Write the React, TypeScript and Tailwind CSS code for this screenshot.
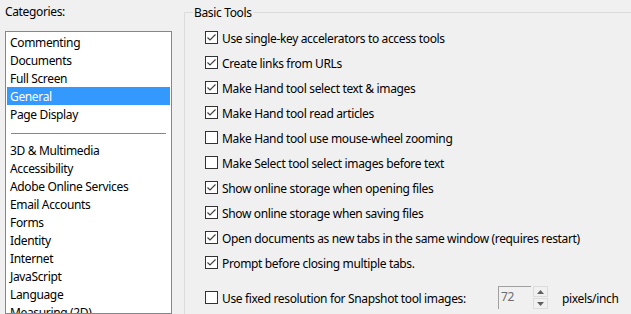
import React from "react";

const categoriesTop = ["Commenting", "Documents", "Full Screen", "General", "Page Display"];
const categoriesBottom = [
  "3D & Multimedia",
  "Accessibility",
  "Adobe Online Services",
  "Email Accounts",
  "Forms",
  "Identity",
  "Internet",
  "JavaScript",
  "Language",
  "Measuring (2D)",
  "Measuring (3D)",
];

const options: [string, boolean][] = [
  ["Use single-key accelerators to access tools", true],
  ["Create links from URLs", true],
  ["Make Hand tool select text & images", true],
  ["Make Hand tool read articles", true],
  ["Make Hand tool use mouse-wheel zooming", false],
  ["Make Select tool select images before text", false],
  ["Show online storage when opening files", true],
  ["Show online storage when saving files", true],
  ["Open documents as new tabs in the same window (requires restart)", true],
  ["Prompt before closing multiple tabs.", true],
];

function Check({ checked }: { checked: boolean }) {
  return (
    <svg width="13" height="13" viewBox="0 0 13 13" className="shrink-0">
      <rect x="0.5" y="0.5" width="12" height="12" fill="#ffffff" stroke="#333333" />
      {checked && (
        <path d="M2.5 6.5 L5 9 L10.5 3.5" fill="none" stroke="#404040" strokeWidth="1.2" />
      )}
    </svg>
  );
}

export default function App() {
  return (
    <div
      className="w-[631px] h-[314px] overflow-hidden bg-[#f0f0f0] flex text-[12px] text-black tracking-[-0.35px]"
      style={{ fontFamily: '"Noto Sans", sans-serif' }}
    >
      <div className="w-[172px] shrink-0 pl-[5px] flex flex-col">
        <div className="h-[31px] leading-[24px]">Categories:</div>
        <div className="w-[167px] flex-1 bg-white border border-[#828790] pt-[1px] px-[1px] overflow-hidden">
          {categoriesTop.map((c) => (
            <div
              key={c}
              className={`h-[18px] leading-[19px] pl-[3px] whitespace-nowrap ${
                c === "General" ? "bg-[#3399ff] text-white" : ""
              }`}
            >
              {c}
            </div>
          ))}
          <div className="h-[18px] flex items-center px-[4px] pt-[3px]">
            <div className="h-[1px] w-full bg-[#3399ff]" />
          </div>
          {categoriesBottom.map((c) => (
            <div key={c} className="h-[18px] leading-[19px] pl-[3px] whitespace-nowrap">
              {c}
            </div>
          ))}
        </div>
      </div>
      <div className="flex-1 pl-[12px] pt-[12px]">
        <div className="relative h-[400px] border-l border-t border-[#dcdcdc] pl-[20px] pt-[12px]">
          <div className="absolute -top-[10px] left-[8px] px-[1px] bg-[#f0f0f0] leading-[19px]">
            Basic Tools
          </div>
          {options.map(([label, checked]) => (
            <div key={label} className="h-[25px] flex items-center gap-[4px] whitespace-nowrap">
              <Check checked={checked} />
              <span className="pt-[2px]">{label}</span>
            </div>
          ))}
          <div className="mt-[10px] h-[25px] flex items-center whitespace-nowrap">
            <Check checked={false} />
            <span className="w-[280px] pl-[4px] pt-[2px]">Use fixed resolution for Snapshot tool images:</span>
            <div className="w-[33px] h-[23px] bg-[#f0f0f0] border-t border-l border-[#a0a0a0] border-b-[#e3e3e3] border-r-[#e3e3e3] text-[#6d6d6d] pl-[2px] leading-[20px]">
              72
            </div>
            <div className="ml-[2px] flex flex-col gap-[1px]">
              <div className="w-[15px] h-[11px] border border-[#dcdcdc] flex items-center justify-center">
                <svg width="7" height="4" viewBox="0 0 7 4">
                  <path d="M0 4 L3.5 0 L7 4 Z" fill="#606060" />
                </svg>
              </div>
              <div className="w-[15px] h-[11px] border border-[#dcdcdc] flex items-center justify-center">
                <svg width="7" height="4" viewBox="0 0 7 4">
                  <path d="M0 0 L3.5 4 L7 0 Z" fill="#606060" />
                </svg>
              </div>
            </div>
            <span className="ml-[14px] pt-[2px]">pixels/inch</span>
          </div>
        </div>
      </div>
    </div>
  );
}
